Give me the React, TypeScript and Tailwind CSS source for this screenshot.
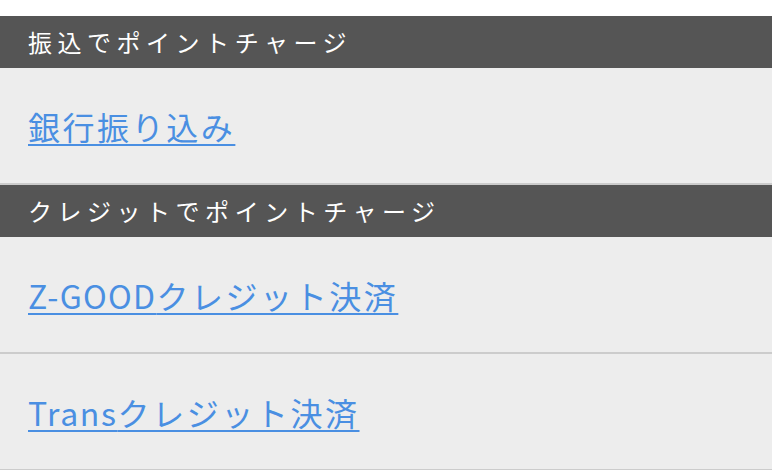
const font = "font-['Noto_Sans_CJK_JP',sans-serif]";

function Header({ children }: { children: React.ReactNode }) {
  return (
    <div className="h-[52px] bg-[#555555] pl-[28px] flex items-center text-white text-[24px] tracking-[0.23em] leading-none">
      {children}
    </div>
  );
}

function Row({ children }: { children: React.ReactNode }) {
  return (
    <div className="h-[117px] bg-[#ededed] border-b-2 border-[#cccccc] pl-[28px] flex items-center">
      <a href="#" className="text-[#4a8fe2] text-[32px] tracking-[0.08em] leading-none underline underline-offset-[4px] decoration-2">
        {children}
      </a>
    </div>
  );
}

export default function App() {
  return (
    <div className={`w-[772px] h-[470px] bg-white pt-4 overflow-hidden ${font}`}>
      <Header>振込でポイントチャージ</Header>
      <Row>銀行振り込み</Row>
      <Header>クレジットでポイントチャージ</Header>
      <Row>
        <span className="tracking-[0.04em]">Z-GOOD</span>クレジット決済
      </Row>
      <Row>
        <span className="tracking-[0.05em]">Trans</span>クレジット決済
      </Row>
    </div>
  );
}
